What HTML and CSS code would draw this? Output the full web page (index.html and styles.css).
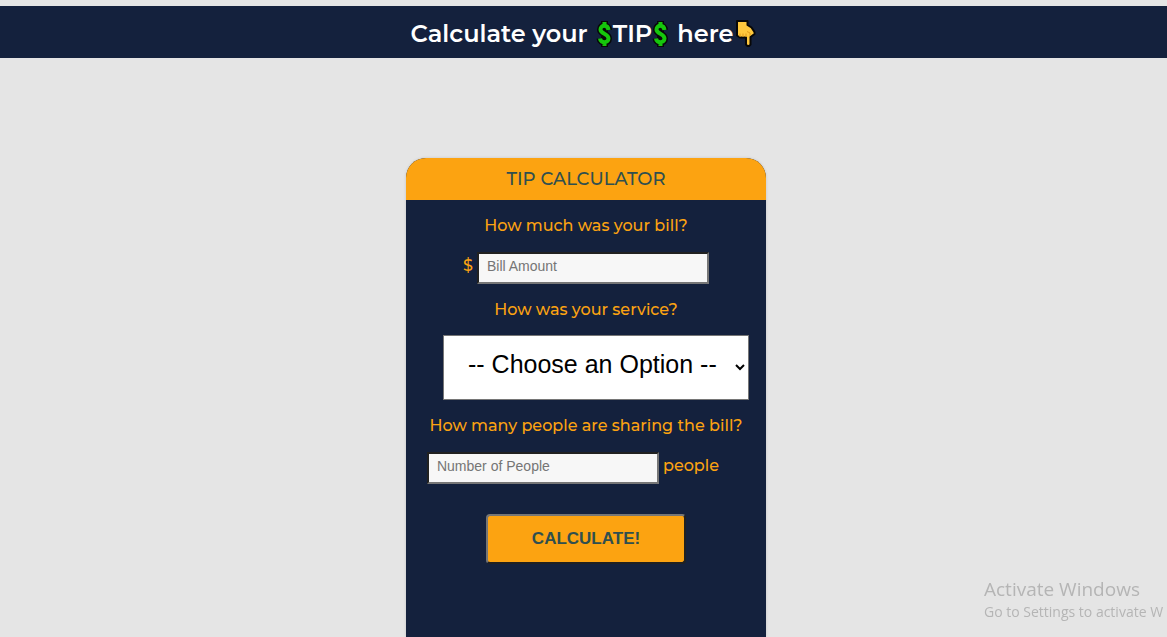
FILE: index.html
```html
<!DOCTYPE html>
<html lang="en">
<head>
<meta charset="utf-8">
<meta name="viewport" content="width=device-width, initial-scale=1">
<title>Tip Calculator</title>
<link rel="stylesheet" href="styles.css">
</head>
<body>
<header class="banner">
  <h1 class="banner-title">
    <span>Calculate your</span>
    <span class="tip">
      <svg class="dollar" viewBox="0 0 16 28" role="img" aria-label="dollar"><path class="dollar-edge" d="M8 1v26M12 10C11.500 4.500 4 4.500 4 9.500C4 14 12 13.500 12 18.500C12 23.500 4 23.500 3.500 18.500"/><path class="dollar-fill" d="M8 2v4M8 22v4M12 10C11.500 4.500 4 4.500 4 9.500C4 14 12 13.500 12 18.500C12 23.500 4 23.500 3.500 18.500"/></svg>
      <span>TIP</span>
      <svg class="dollar" viewBox="0 0 16 28" role="img" aria-label="dollar"><path class="dollar-edge" d="M8 1v26M12 10C11.500 4.500 4 4.500 4 9.500C4 14 12 13.500 12 18.500C12 23.500 4 23.500 3.500 18.500"/><path class="dollar-fill" d="M8 2v4M8 22v4M12 10C11.500 4.500 4 4.500 4 9.500C4 14 12 13.500 12 18.500C12 23.500 4 23.500 3.500 18.500"/></svg>
    </span>
    <span class="here">here<svg class="hand" viewBox="0 0 23 28" role="img" aria-label="pointing down"><path d="M4 1h10.500v4l4 2.500 3 4.500v2L17.500 17v7.500l-1.500 1.500h-1.500L13 24.500V17.500H7L4 15.500z" fill="#ffc83d" stroke="#080808" stroke-width="2" stroke-linejoin="round"/><path d="M7 13.500v3.500M10 13.500v3.500M13 13.500v3.500M14 11.500l3 1.500v3" fill="none" stroke="#e19b1c" stroke-width="1"/></svg></span>
  </h1>
</header>
<main class="page">
  <form class="card">
    <h2 class="card-title">TIP CALCULATOR</h2>
    <div class="fields">
      <label class="question" for="bill">How much was your bill?</label>
      <div class="row">
        <span>$</span>
        <input class="text-box" id="bill" type="text" placeholder="Bill Amount">
      </div>
      <label class="question" for="service">How was your service?</label>
      <select class="service" id="service">
        <option>-- Choose an Option --</option>
      </select>
      <label class="question" for="people">How many people are sharing the bill?</label>
      <div class="row row-people">
        <input class="text-box" id="people" type="text" placeholder="Number of People">
        <span>people</span>
      </div>
      <button class="calculate" type="button">CALCULATE!</button>
    </div>
  </form>
</main>
<aside class="notice">
  <p class="notice-title">Activate Windows</p>
  <p class="notice-text">Go to Settings to activate W</p>
</aside>
</body>
</html>
```
FILE: styles.css
```css
* {
  box-sizing: border-box;
}

body {
  display: flex;
  flex-direction: column;
  height: 100vh;
  margin: 0;
  padding-top: 6px;
  overflow: hidden;
  background: #e5e5e5;
  font-family: Montserrat, Inter, sans-serif;
}

.banner {
  flex: none;
  padding: 12px 10px 8px;
  background: #14213d;
  color: #fff;
}

.banner-title {
  display: flex;
  justify-content: center;
  gap: 8px;
  margin: 0;
  font-size: 24px;
  font-weight: 600;
  line-height: 32px;
  white-space: nowrap;
}

.tip,
.here {
  display: flex;
  align-items: center;
}

.dollar {
  width: 17px;
  height: 28px;
  fill: none;
}

.dollar-edge {
  stroke: #080808;
  stroke-width: 7;
}

.dollar-fill {
  stroke: #16c60c;
  stroke-width: 4;
}

.hand {
  width: 23px;
  height: 28px;
}

.page {
  display: flex;
  flex: 1;
  justify-content: center;
  min-height: 0;
  padding: 100px 0 0 5px;
}

.card {
  width: 360px;
  overflow: hidden;
  border-radius: 20px 20px 0 0;
  background: #14213d;
  box-shadow: 0 0 3px rgba(0, 0, 0, 0.15);
  color: #fca311;
}

.card-title {
  margin: 0;
  background: #fca311;
  color: #2f4f4f;
  font-size: 18px;
  font-weight: 500;
  line-height: 42px;
  text-align: center;
}

.fields {
  display: flex;
  flex-direction: column;
  align-items: center;
  padding-top: 16px;
  font-size: 16px;
  font-weight: 500;
  line-height: 20px;
}

.question {
  white-space: nowrap;
}

.row {
  display: flex;
  gap: 4px;
  margin: 16px 0;
  line-height: 28px;
}

.row-people {
  margin-right: 26px;
}

.text-box {
  width: 232px;
  height: 32px;
  padding: 0 8px 4px;
  border: 2px inset #767676;
  border-radius: 0;
  background: #f7f7f7;
  font-family: "Liberation Sans", Arial, sans-serif;
  font-size: 14px;
}

.text-box::placeholder {
  color: #757575;
}

.service {
  width: 306px;
  height: 65px;
  margin: 15px 0 16px 20px;
  padding: 0 0 8px 20px;
  border: 1px solid #767676;
  border-radius: 0;
  background: #fff;
  color: #000;
  font-family: "Liberation Sans", Arial, sans-serif;
  font-size: 25px;
}

.calculate {
  width: 200px;
  height: 50px;
  margin-top: 14px;
  border: 2px outset #767676;
  border-radius: 4px;
  background: #fca311;
  color: #2f4f4f;
  font-family: "Liberation Sans", Arial, sans-serif;
  font-size: 17px;
  font-weight: 700;
}

/* System notice, floating over the lower right corner of the page */
.notice {
  position: fixed;
  right: 0;
  bottom: 15px;
  width: 183px;
  color: #b5b5b5;
  font-family: "Segoe UI", "Open Sans", sans-serif;
  white-space: nowrap;
}

.notice p {
  margin: 0;
}

.notice-title {
  font-size: 19px;
  line-height: 26px;
}

.notice-text {
  font-size: 14px;
  line-height: 20px;
}
```
